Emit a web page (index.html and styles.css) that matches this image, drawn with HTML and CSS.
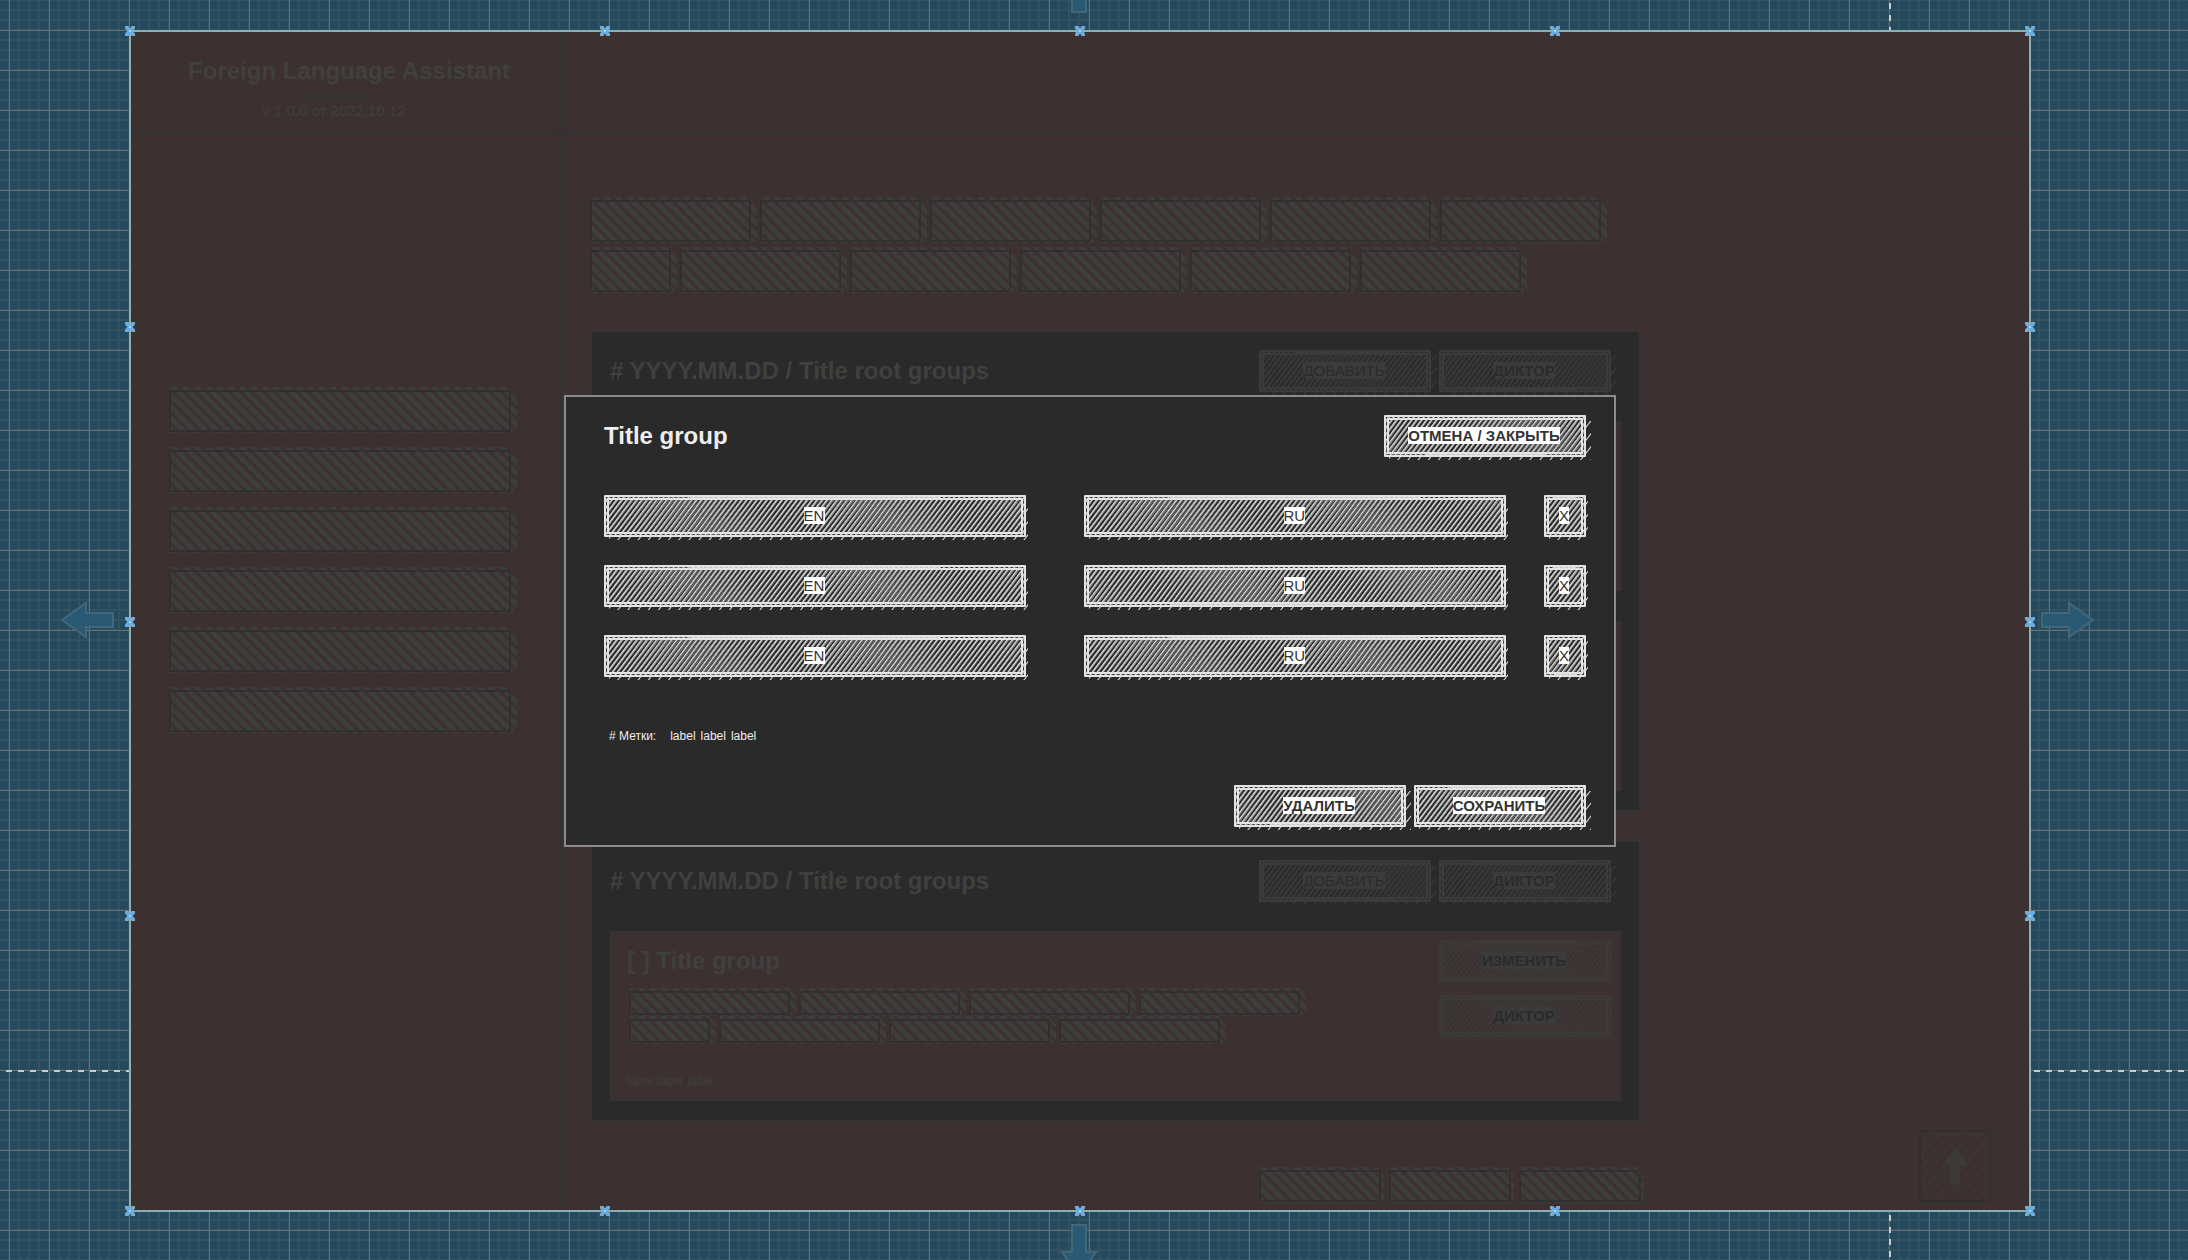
FILE: index.html
```html
<!DOCTYPE html>
<html lang="ru">
<head>
<meta charset="utf-8">
<title>Foreign Language Assistant</title>
<link rel="stylesheet" href="styles.css">
</head>
<body>
<svg class="defs" aria-hidden="true">
  <symbol id="handle" viewBox="0 0 10 10">
    <path d="M0 0h3.4L5 2.6 6.6 0H10v2.4L7.6 5 10 7.6V10H6.6L5 7.4 3.4 10H0V7.6L2.4 5 0 2.4z" fill="#8aa9be"/>
    <path d="M1 1l8 8M9 1L1 9" stroke="#5db0ee" stroke-width="2.4"/>
    <rect x="4" y="4" width="2" height="2" fill="#a9d4f4"/>
  </symbol>
  <symbol id="pan" viewBox="0 0 54 38">
    <path d="M1 19L25 2v10h27v14H25v10z" fill="#2a5974" stroke="#42677b" stroke-width="2"/>
  </symbol>
</svg>

<div class="canvas">
  <div class="guide guide-x"></div>
  <div class="guide guide-y"></div>
  <svg class="pan pan-left"><use href="#pan"/></svg>
  <svg class="pan pan-right"><use href="#pan"/></svg>
  <svg class="pan pan-top"><use href="#pan"/></svg>
  <svg class="pan pan-bottom"><use href="#pan"/></svg>

  <div class="artboard">
    <header class="brand">
      <h1>Foreign Language Assistant</h1>
      <hr>
      <p>v 1.0.0 от 2022.10.12</p>
    </header>
    <div class="topbar"></div>

    <ul class="menu">
      <li class="hatch"></li>
      <li class="hatch"></li>
      <li class="hatch"></li>
      <li class="hatch"></li>
      <li class="hatch"></li>
      <li class="hatch"></li>
    </ul>

    <main class="main">
      <div class="content">
        <div class="tags">
          <div class="tag-row"><i class="hatch"></i><i class="hatch"></i><i class="hatch"></i><i class="hatch"></i><i class="hatch"></i><i class="hatch"></i></div>
          <div class="tag-row"><i class="hatch half"></i><i class="hatch"></i><i class="hatch"></i><i class="hatch"></i><i class="hatch"></i><i class="hatch"></i></div>
        </div>

        <section class="card">
          <div class="card-head">
            <h2># YYYY.MM.DD / Title root groups</h2>
            <button type="button" class="sketch dim"><span>ДОБАВИТЬ</span></button>
            <button type="button" class="sketch dim bold low"><span>ДИКТОР</span></button>
          </div>
          <div class="group"></div>
          <div class="group"></div>
        </section>

        <section class="card">
          <div class="card-head">
            <h2># YYYY.MM.DD / Title root groups</h2>
            <button type="button" class="sketch dim low"><span>ДОБАВИТЬ</span></button>
            <button type="button" class="sketch dim bold"><span>ДИКТОР</span></button>
          </div>
          <div class="group">
            <div class="group-body">
              <h3>[ ] Title group</h3>
              <div class="tags small">
                <div class="tag-row"><i class="hatch"></i><i class="hatch"></i><i class="hatch"></i><i class="hatch"></i></div>
                <div class="tag-row"><i class="hatch half"></i><i class="hatch"></i><i class="hatch"></i><i class="hatch"></i></div>
              </div>
              <div class="labels"><span>label</span><span>label</span><span>label</span></div>
            </div>
            <div class="group-actions">
              <button type="button" class="sketch dim warm bold"><span>ИЗМЕНИТЬ</span></button>
              <button type="button" class="sketch dim warm bold"><span>ДИКТОР</span></button>
            </div>
          </div>
        </section>

        <div class="pages"><i class="hatch"></i><i class="hatch"></i><i class="hatch"></i></div>
      </div>

      <form class="modal">
        <div class="modal-head">
          <h2>Title group</h2>
          <button type="button" class="sketch bold low wide"><span>ОТМЕНА / ЗАКРЫТЬ</span></button>
        </div>
        <div class="pairs">
          <div class="pair">
            <label class="sketch field"><input type="text" value="EN"></label>
            <label class="sketch field"><input type="text" value="RU"></label>
            <button type="button" class="sketch field square"><span>X</span></button>
          </div>
          <div class="pair">
            <label class="sketch field"><input type="text" value="EN"></label>
            <label class="sketch field low"><input type="text" value="RU"></label>
            <button type="button" class="sketch field square"><span>X</span></button>
          </div>
          <div class="pair">
            <label class="sketch field"><input type="text" value="EN"></label>
            <label class="sketch field"><input type="text" value="RU"></label>
            <button type="button" class="sketch field square low"><span>X</span></button>
          </div>
        </div>
        <div class="marks"># Метки: <div class="labels"><span>label</span><span>label</span><span>label</span></div></div>
        <div class="modal-foot">
          <button type="button" class="sketch bold low"><span>УДАЛИТЬ</span></button>
          <button type="submit" class="sketch bold"><span>СОХРАНИТЬ</span></button>
        </div>
      </form>
    </main>

    <button type="button" class="to-top" aria-label="Наверх">
      <svg viewBox="0 0 28 38" width="28" height="38"><path d="M14 1l14 17H19v19H9V18H0z" fill="#3d3a38" stroke="#363635"/></svg>
    </button>

    <div class="handles handles-top"><svg><use href="#handle"/></svg><svg><use href="#handle"/></svg><svg><use href="#handle"/></svg><svg><use href="#handle"/></svg><svg><use href="#handle"/></svg></div>
    <div class="handles handles-bottom"><svg><use href="#handle"/></svg><svg><use href="#handle"/></svg><svg><use href="#handle"/></svg><svg><use href="#handle"/></svg><svg><use href="#handle"/></svg></div>
    <div class="handles handles-left"><svg><use href="#handle"/></svg><svg><use href="#handle"/></svg><svg><use href="#handle"/></svg></div>
    <div class="handles handles-right"><svg><use href="#handle"/></svg><svg><use href="#handle"/></svg><svg><use href="#handle"/></svg></div>
  </div>
</div>
</body>
</html>
```
FILE: styles.css
```css
:root {
  --maroon: #3c3030;
  --dark: #2a2a2a;
  --faint: #3d3d3c;
  --rule: #2f3232;
}

* { box-sizing: border-box; }

body {
  margin: 0;
  font: 15px/17px "Liberation Sans", Arial, sans-serif;
  color: #40403f;
}

h1, h2, h3, p, ul, hr { margin: 0; padding: 0; }
h1, h2, h3 { font-size: 24px; line-height: 28px; }
ul { list-style: none; }
button, input { font: inherit; color: inherit; border: 0; padding: 0; background: none; }
.defs { position: absolute; width: 0; height: 0; }

/* Blueprint grid: 40px squares split into 10px cells */
.canvas {
  position: relative;
  overflow: hidden;
  min-height: 100vh;
  padding: 30px 157px 48px 129px;
  background:
    repeating-linear-gradient(90deg, transparent 0 9px, #6c6e70 9px 10px, transparent 10px 40px),
    repeating-linear-gradient(180deg, transparent 0 30px, #6c6e70 30px 31px, transparent 31px 40px),
    repeating-linear-gradient(90deg, transparent 0 8px, #34515f 8px 10px),
    repeating-linear-gradient(180deg, #34515f 0 1px, transparent 1px 9px, #34515f 9px 10px),
    #234a5e;
}

.guide { position: absolute; }
.guide-x {
  left: 6px; right: 0; top: 1070px; height: 2px;
  background: repeating-linear-gradient(90deg, #c9cccb 0 6px, transparent 6px 12px);
}
.guide-y {
  left: 1889px; top: 3px; bottom: 0; width: 2px;
  background: repeating-linear-gradient(180deg, #c9cccb 0 6px, transparent 6px 12px);
}

.pan { position: absolute; width: 54px; height: 38px; }
.pan-left { left: 61px; top: 601px; }
.pan-right { right: 94px; top: 601px; transform: rotate(180deg); }
.pan-top { left: 1052px; top: -32px; transform: rotate(90deg); }
.pan-bottom { left: 1052px; bottom: -9px; transform: rotate(-90deg); }

.artboard {
  position: relative;
  display: grid;
  grid-template-columns: 430px minmax(0, 1fr);
  grid-template-rows: auto 1fr;
  border: 2px solid #8ab0b4;
  background: var(--maroon);
}

.brand {
  display: flex;
  flex-direction: column;
  align-items: center;
  height: 100px;
  padding: 25px 22px 0 0;
  border-right: 2px solid var(--rule);
  border-bottom: 2px solid var(--rule);
}
.brand h1 { padding-left: 30px; white-space: nowrap; }
.brand hr { width: 70px; height: 2px; margin: 10px 0 5px; border: 0; background: var(--rule); }
.brand p { line-height: 18px; }
.topbar { border-bottom: 2px solid var(--rule); }

.menu {
  display: flex;
  flex-direction: column;
  gap: 18px;
  padding: 258px 48px 0 38px;
  border-right: 2px solid var(--rule);
}

/* Placeholder block filled with thick diagonal strokes that run past its edge */
.hatch { position: relative; display: block; height: 42px; }
.hatch::before {
  content: "";
  position: absolute;
  inset: -3px -6px -1px 1px;
  background: repeating-linear-gradient(45deg, transparent 0, var(--faint) 1px 5px, transparent 6px 8px);
  clip-path: polygon(0 0, calc(100% - 7px) 0, 100% 9px, 100% calc(100% - 4px), calc(100% - 7px) 100%, 0 100%);
}
.hatch::after {
  content: "";
  position: absolute;
  inset: 0;
  border: 2px solid #2f302f;
  border-radius: 1px;
}

.main { position: relative; padding: 68px 29px 8px; }
.content { max-width: 1051px; }
.tags { display: flex; flex-direction: column; gap: 8px; }
.tag-row { display: flex; gap: 9px; }
.tag-row .hatch { width: 161px; }
.tag-row .half { width: 81px; }
.small { gap: 4px; padding-left: 2px; }
.small .hatch { height: 24px; }

.card {
  margin-top: 28px;
  padding: 18px 18px 19px;
  border: 2px solid #353535;
  background: var(--dark);
}
.tags + .card { margin-top: 38px; }
.card-head { display: flex; align-items: center; gap: 8px; padding: 0 10px 29px 0; }
.card-head h2 { flex: 1; }

.group {
  display: flex;
  justify-content: space-between;
  min-height: 170px;
  padding: 8px 9px 12px 16px;
  border: 1px solid #353536;
  background: var(--maroon);
}
.group + .group { margin-top: 30px; }
.group-body { padding-top: 7px; }
.group-body h3 { margin-bottom: 16px; }
.group-body .labels { margin-top: 31px; }
.group-actions { display: flex; flex-direction: column; gap: 13px; }
.labels { display: flex; gap: 5px; font-size: 12px; line-height: 14px; }

.pages { display: flex; justify-content: flex-end; gap: 8px; margin-top: 48px; }
.pages .hatch { width: 122px; height: 32px; }
.pages .hatch::before { right: -3px; }

/* Pencil-shaded control: double frame over two nearly parallel sets of strokes */
.sketch {
  --ink: #e4e4e4;
  --soft: rgba(228, 228, 228, 0.35);
  --wash: rgba(228, 228, 228, 0.8);
  --paper: var(--dark);
  --mark: #fff;
  --letter: #333;
  position: relative;
  display: flex;
  align-items: center;
  justify-content: center;
  width: 172px;
  height: 42px;
  padding: 0 2px 2px 0;
  color: var(--letter);
}
.sketch::before {
  content: "";
  position: absolute;
  inset: 6px -5px -3px 5px;
  background: repeating-linear-gradient(128deg, transparent 0 6px, var(--ink) 7px, transparent 8px);
}
.sketch::after {
  content: "";
  position: absolute;
  inset: 0;
  border: 2px solid var(--ink);
  outline: 2px solid var(--ink);
  outline-offset: -5px;
  border-radius: 1px;
  background:
    linear-gradient(var(--wash), var(--wash)) 50% 0 / 60% 3px no-repeat,
    repeating-linear-gradient(127deg, transparent 0 1px, var(--ink) 2px, transparent 4px),
    repeating-linear-gradient(129deg, transparent 0 2px, var(--soft) 3px, transparent 4px),
    var(--paper);
}
.low::after {
  background:
    linear-gradient(var(--wash), var(--wash)) 50% 100% / 60% 3px no-repeat,
    repeating-linear-gradient(127deg, transparent 0 1px, var(--ink) 2px, transparent 4px),
    repeating-linear-gradient(125deg, transparent 0 2px, var(--soft) 3px, transparent 4px),
    var(--paper);
}
.sketch span, .sketch input {
  position: relative;
  z-index: 1;
  background: var(--mark);
}
.sketch input { width: 21px; height: 17px; text-align: center; }
.bold { font-weight: 700; }
.wide { width: 202px; }
.dim {
  --ink: #3b3b3b;
  --soft: rgba(60, 60, 60, 0.5);
  --wash: #3b3b3b;
  --mark: #3b3b3b;
  --letter: #2b2b2b;
}
.warm { --paper: var(--maroon); --ink: #3c3a39; }
.field { flex: 1; }
.field::before { right: -2px; }
.square { flex: 0 0 42px; }

.modal {
  position: absolute;
  left: 3px;
  top: 263px;
  z-index: 2;
  width: min(1052px, 100% - 6px);
  padding: 18px 28px 18px 38px;
  border: 2px solid #8d8b8b;
  background: var(--dark);
  color: #eee;
}
.modal-head { display: flex; align-items: center; justify-content: space-between; }
.pairs { display: flex; flex-direction: column; gap: 28px; margin-top: 38px; }
.pair { display: flex; gap: 38px; }
.pair .field:first-child { margin-right: 20px; }
.marks { display: flex; gap: 14px; margin: 52px 0 42px; padding-left: 5px; font-size: 12px; line-height: 14px; }
.modal-foot { display: flex; justify-content: flex-end; gap: 8px; }

.to-top {
  position: absolute;
  right: 38px;
  bottom: 8px;
  display: grid;
  place-items: center;
  width: 72px;
  height: 72px;
  border: 2px solid #312f2f;
  background: repeating-linear-gradient(130deg, transparent 0 6px, #3d3a38 7px, transparent 8px) padding-box;
}

.handles { position: absolute; display: flex; justify-content: space-between; }
.handles svg { width: 10px; height: 10px; }
.handles-top, .handles-bottom { left: -6px; right: -6px; }
.handles-top { top: -6px; }
.handles-bottom { bottom: -6px; }
.handles-left, .handles-right { flex-direction: column; top: 290px; bottom: 289px; }
.handles-left { left: -6px; }
.handles-right { right: -6px; }
```
